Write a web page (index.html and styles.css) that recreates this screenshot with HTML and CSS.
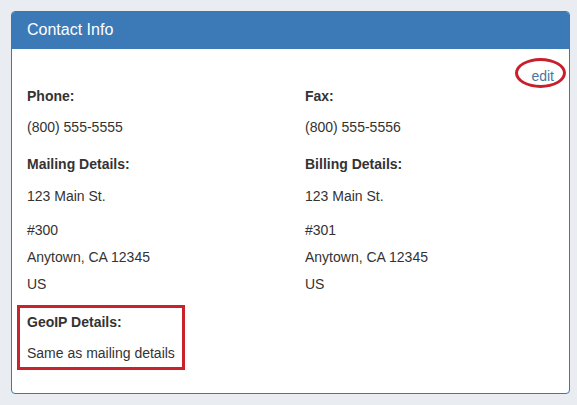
FILE: index.html
```html
<!DOCTYPE html>
<html>
<head>
<meta charset="utf-8">
<link rel="stylesheet" href="styles.css">
</head>
<body>
<div class="page">
  <div class="panel">
    <div class="panel-heading">Contact Info</div>
    <div class="panel-body">
      <div class="edit-row"><a class="edit" href="#">edit<span class="ring"></span></a></div>
      <div class="cols">
        <div class="col">
          <div class="label">Phone:</div>
          <div class="value">(800) 555-5555</div>
          <div class="label sec">Mailing Details:</div>
          <div class="line first">123 Main St.</div>
          <div class="line">#300</div>
          <div class="line">Anytown, CA 12345</div>
          <div class="line last">US</div>
        </div>
        <div class="col">
          <div class="label">Fax:</div>
          <div class="value">(800) 555-5556</div>
          <div class="label sec">Billing Details:</div>
          <div class="line first">123 Main St.</div>
          <div class="line">#301</div>
          <div class="line">Anytown, CA 12345</div>
          <div class="line last">US</div>
        </div>
      </div>
      <div class="highlight">
        <div class="label">GeoIP Details:</div>
        <div class="line last">Same as mailing details</div>
      </div>
    </div>
  </div>
</div>
</body>
</html>
```
FILE: styles.css
```css
html, body {
  margin: 0;
  padding: 0;
  background: #e9edf1;
}
body {
  font-family: "Liberation Sans", Arial, sans-serif;
  font-size: 14px;
  line-height: 20px;
  color: #333333;
}
.page {
  padding: 11px 0 0 11px;
}
.panel {
  width: 557px;
  border: 1px solid #3a78b5;
  border-radius: 4px;
  background: #ffffff;
  overflow: hidden;
}
.panel-heading {
  background: #3c7ab7;
  color: #ffffff;
  font-size: 16px;
  line-height: 20px;
  padding: 8px 15px 9px 15px;
}
.panel-body {
  padding: 17px 15px 23px 15px;
}
.edit-row {
  display: flex;
  justify-content: flex-end;
}
.edit {
  position: relative;
  color: #4a74a0;
  text-decoration: none;
}
.ring {
  position: absolute;
  left: -16px;
  top: -8px;
  width: 45px;
  height: 24px;
  border: 3px solid #c7202c;
  border-radius: 50%;
}
.cols {
  display: grid;
  grid-template-columns: 278px 1fr;
}
.label {
  font-weight: bold;
  margin-bottom: 11px;
}
.label.sec {
  margin-bottom: 12px;
}
.value {
  margin-bottom: 17px;
}
.line {
  margin-bottom: 7px;
}
.line.first {
  margin-bottom: 14px;
}
.line.last {
  margin-bottom: 0;
}
.highlight {
  width: fit-content;
  margin: 11px 0 0 -10px;
  border: 3px solid #c8222d;
  padding: 4px 7px;
}
```
